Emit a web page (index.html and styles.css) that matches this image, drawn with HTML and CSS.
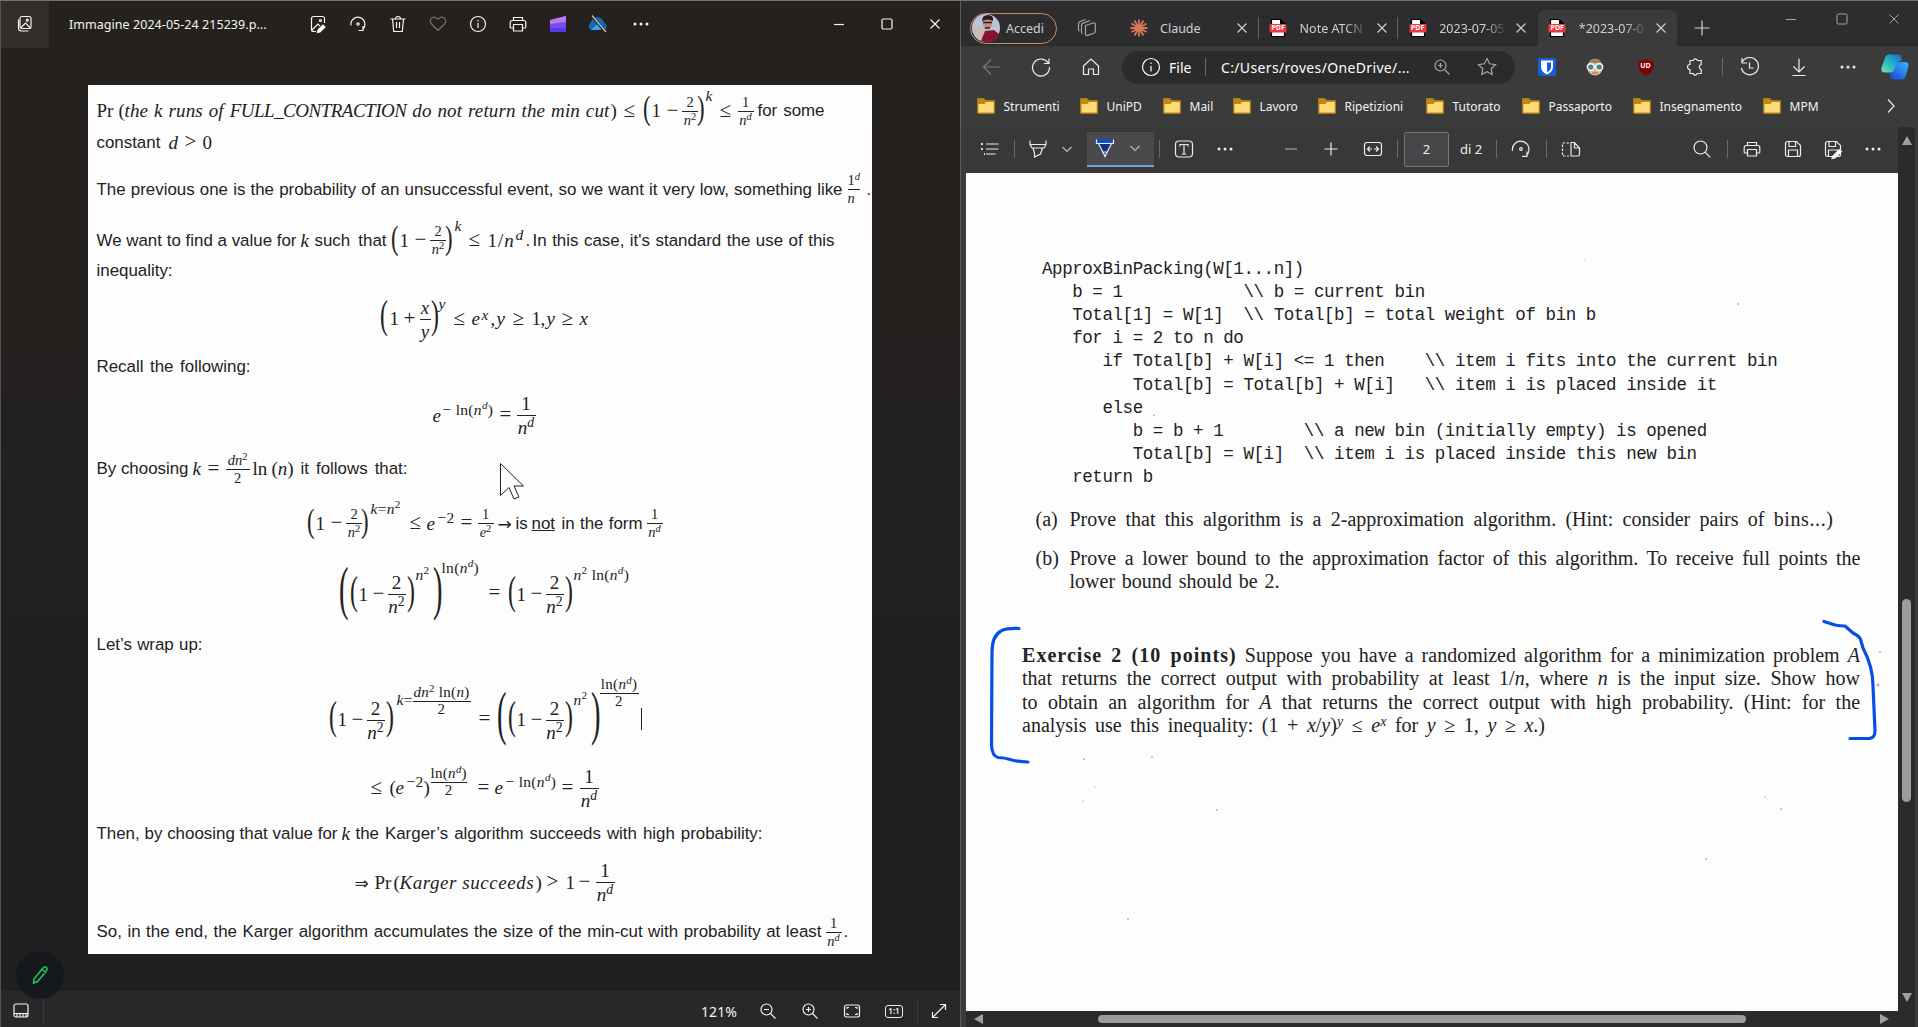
FILE: index.html
```html
<!DOCTYPE html>
<html lang="it">
<head>
<meta charset="utf-8">
<title>Immagine 2024-05-24 215239</title>
<link rel="stylesheet" href="styles.css">
</head>
<body>
<svg class="defs" width="0" height="0">
  <symbol id="x" viewBox="0 0 20 20"><path d="M5.500 5.500l9 9M14.500 5.500l-9 9"/></symbol>
  <symbol id="min" viewBox="0 0 20 20"><path d="M5 10.500h10"/></symbol>
  <symbol id="max" viewBox="0 0 20 20"><rect x="5" y="5" width="10" height="10" rx="1.200"/></symbol>
  <symbol id="dots" viewBox="0 0 20 20"><g fill="currentColor" stroke="none"><circle cx="4" cy="10" r="1.500"/><circle cx="10" cy="10" r="1.500"/><circle cx="16" cy="10" r="1.500"/></g></symbol>
  <symbol id="info" viewBox="0 0 20 20"><circle cx="10" cy="10" r="7.500"/><path d="M10 9v5M10 6v1.400"/></symbol>
  <symbol id="print" viewBox="0 0 20 20"><path d="M5.500 6.500V3.500h9v3M5.500 14H3.200a1 1 0 0 1-1-1V8.500a2 2 0 0 1 2-2h11.600a2 2 0 0 1 2 2V13a1 1 0 0 1-1 1H14.500M5.500 10.500h9v6.500h-9z"/></symbol>
  <symbol id="zin" viewBox="0 0 20 20"><circle cx="8.500" cy="8.500" r="5.500"/><path d="M12.500 12.500l5 5M8.500 6v5M6 8.500h5"/></symbol>
  <symbol id="zout" viewBox="0 0 20 20"><circle cx="8.500" cy="8.500" r="5.500"/><path d="M12.500 12.500l5 5M6 8.500h5"/></symbol>
  <symbol id="chev" viewBox="0 0 14 14"><path d="M2.500 5l4.500 4.500L11.500 5"/></symbol>
  <symbol id="folder" viewBox="0 0 18 16"><path d="M.5 1.500a1 1 0 0 1 1-1h5l2 2h8a1 1 0 0 1 1 1v10.800a1 1 0 0 1-1 1h-15a1 1 0 0 1-1-1z" fill="#c08a12" stroke="#a87b1e"/><path d="M1.500 6h6l1.500-2h7.700v10.500H1.500z" fill="#ffdc78" stroke="none"/></symbol>
  <symbol id="pdf" viewBox="0 0 20 20"><path d="M3.500 1.500h9l4 4v13h-13z" fill="#fff" stroke="#000"/><path d="M12 1v5h5z" fill="#000" stroke="none"/><rect x="1.500" y="6" width="17" height="8.600" rx="1" fill="#e8373e" stroke="none"/></symbol>
  <symbol id="save" viewBox="0 0 20 20"><path d="M4.500 2.500h9l4 4v9a2 2 0 0 1-2 2h-11a2 2 0 0 1-2-2v-11a2 2 0 0 1 2-2zM6 3v4.500h6.500V3M5.500 17v-6h9v6"/></symbol>
  <symbol id="rot" viewBox="0 0 20 20"><path d="M1.500 12a8.300 8.300 0 1 1 14 4.500M16 12.500v4.800h-5"/><circle cx="10" cy="10" r="1.300"/></symbol>
</svg>
<div class="desktop">

<section class="photos">
  <header class="photos-bar">
    <span class="tile"><svg class="ic"><g><rect x="5" y="2.500" width="11" height="12" rx="2"/><path d="M3.500 5.500v8.500a3 3 0 0 0 3 3h7M6 13.500l4.500-4.500 4.500 4.500"/><circle cx="12.300" cy="6.200" r="1"/></g></svg></span>
    <span class="name">Immagine 2024-05-24 215239.p...</span>
    <svg class="ic"><path d="M16.500 9V4.500a2 2 0 0 0-2-2h-9a2 2 0 0 0-2 2v11a2 2 0 0 0 2 2h2.500M4 16l6-6 2 2"/><circle cx="12.500" cy="6.500" r="1"/><path d="M10 16l5-5 2 2-5 5-2.500.5z" fill="#fff"/></svg>
    <svg class="ic"><path d="M3 11.500a7 7 0 1 1 11.500 4M15 12v4.500h-4.500"/><circle cx="10" cy="10" r="1.200"/></svg>
    <svg class="ic"><path d="M2.500 5h15M7.500 5a2.500 2.500 0 0 1 5 0M4.500 5l1.200 12.500h8.600L15.500 5M8.500 8v6M11.500 8v6"/></svg>
    <svg class="ic dim"><path d="M10 16.500L3.500 10C-.5 5 6.500.5 10 5.500 13.500.5 20.500 5 16.500 10z"/></svg>
    <svg class="ic"><use href="#info"/></svg>
    <svg class="ic"><use href="#print"/></svg>
    <svg class="ic"><path d="M2 6l16-4v16H2z" fill="#7a4cf0" stroke="none"/><path d="M2 6l16-4v6L2 10z" fill="#b87af2" stroke="none"/><path d="M2 14h16v4H2z" fill="#5a3ae8" stroke="none"/></svg>
    <svg class="ic"><path d="M4 16a4 4 0 0 1-1-7.500A6 6 0 0 1 13 4.500a6 6 0 0 1 3 4A4 4 0 0 1 16 16z" fill="#0f6cbd" stroke="none"/><path d="M3 16l7-6.500 7.500 6z" fill="#35a8ee" stroke="none"/><path d="M3.500 1.500l14 16.500" stroke="#2a2420" stroke-width="3"/><path d="M4 1.500l14 16.500" stroke="#c8c8c8"/></svg>
    <svg class="ic"><use href="#dots"/></svg>
    <svg class="ic"><use href="#min"/></svg>
    <svg class="ic"><use href="#max"/></svg>
    <svg class="ic"><use href="#x"/></svg>
  </header>

  <main class="doc">
    <div class="row r1"><span>Pr</span><span>(</span><em class="j">the k runs of <span class="caps">FULL_CONTRACTION</span> do not return the min cut</em><span>)</span><span class="op">≤</span>
      <span class="ps"><span class="p">(</span><span>1</span><span class="op">−</span><span class="frac s"><span>2</span><span><em>n</em><sup>2</sup></span></span><span class="p">)</span></span>
      <em class="e up15">k</em><span class="op">≤</span><span class="frac s"><span>1</span><span><em>n<sup>d</sup></em></span></span><span class="t j">for some</span></div>
    <div class="row r2"><span class="t">constant</span><em>d</em><span class="op">&gt;</span><span>0</span></div>
    <div class="row r3"><span class="t j">The previous one is the probability of an unsuccessful event, so we want it very low, something like</span><span class="frac s tall"><span>1<sup><em>d</em></sup></span><span><em>n</em></span></span><span class="t">.</span></div>
    <div class="row r4"><span class="t j">We want to find a value for</span><em>k</em><span class="t j">such that</span>
      <span class="ps"><span class="p">(</span><span>1</span><span class="op">−</span><span class="frac s"><span>2</span><span><em>n</em><sup>2</sup></span></span><span class="p">)</span></span>
      <em class="e up15">k</em><span class="op">≤</span><span class="slash">1/<em>n</em></span><em class="e up5">d</em><span class="t">.</span><span class="t j">In this case, it's standard the use of this</span></div>
    <div class="row r5"><span class="t">inequality:</span></div>
    <div class="row r6"><span class="p l">(</span><span>1</span><span class="op">+</span><span class="frac"><em>x</em><em>y</em></span><span class="p l">)</span><em class="e up15">y</em><span class="op">≤</span><em>e</em><em class="e up4">x</em><span>,</span><em>y</em><span class="op">≥</span><span>1</span><span>,</span><em>y</em><span class="op">≥</span><em>x</em></div>
    <div class="row r7"><span class="t j">Recall the following:</span></div>
    <div class="row r8"><em>e</em><span class="e up5">− ln(<em>n</em><sup><em>d</em></sup>)</span><span class="op">=</span><span class="frac"><span>1</span><span><em>n<sup>d</sup></em></span></span></div>
    <div class="row r9"><span class="t j">By choosing</span><em>k</em><span class="op">=</span><span class="frac s"><span><em>dn</em><sup>2</sup></span><span>2</span></span><span>ln</span><span>(<em>n</em>)</span><span class="t j">it follows that:</span></div>
    <div class="row r10"><span class="ps"><span class="p">(</span><span>1</span><span class="op">−</span><span class="frac s"><span>2</span><span><em>n</em><sup>2</sup></span></span><span class="p">)</span></span>
      <span class="e up15"><em>k</em>=<em>n</em><sup>2</sup></span><span class="op">≤</span><em>e</em><span class="e up5">−2</span><span class="op">=</span><span class="frac s"><span>1</span><span><em>e</em><sup>2</sup></span></span><span class="arrow">→</span><span class="t">is</span><u class="t">not</u><span class="t j">in the form</span><span class="frac s"><span>1</span><span><em>n<sup>d</sup></em></span></span></div>
    <div class="row r11"><span class="p xl">(</span><span class="pl"><span class="p l">(</span><span>1</span><span class="op">−</span><span class="frac"><span>2</span><span><em>n</em><sup>2</sup></span></span><span class="p l">)</span></span><span class="e up20"><em>n</em><sup>2</sup></span><span class="p xl">)</span><span class="e up27">ln(<em>n</em><sup><em>d</em></sup>)</span><span class="op">=</span><span class="pl"><span class="p l">(</span><span>1</span><span class="op">−</span><span class="frac"><span>2</span><span><em>n</em><sup>2</sup></span></span><span class="p l">)</span></span><span class="e up20"><em>n</em><sup>2</sup> ln(<em>n</em><sup><em>d</em></sup>)</span></div>
    <div class="row r12"><span class="t j">Let’s wrap up:</span></div>
    <div class="row r13"><span class="pl"><span class="p l">(</span><span>1</span><span class="op">−</span><span class="frac"><span>2</span><span><em>n</em><sup>2</sup></span></span><span class="p l">)</span></span><span class="e up20"><em>k</em>=</span><span class="frac s ef up19"><span><em>dn</em><sup>2</sup> ln(<em>n</em>)</span><span>2</span></span><span class="op">=</span><span class="p xl">(</span><span class="pl"><span class="p l">(</span><span>1</span><span class="op">−</span><span class="frac"><span>2</span><span><em>n</em><sup>2</sup></span></span><span class="p l">)</span></span><span class="e up20"><em>n</em><sup>2</sup></span><span class="p xl">)</span><span class="frac s ef up27"><span>ln(<em>n</em><sup><em>d</em></sup>)</span><span>2</span></span><span class="caret"></span></div>
    <div class="row r14"><span class="op">≤</span><span>(</span><em>e</em><span class="e up5">−2</span><span>)</span><span class="frac s ef up6"><span>ln(<em>n</em><sup><em>d</em></sup>)</span><span>2</span></span><span class="op">=</span><em>e</em><span class="e up5">− ln(<em>n</em><sup><em>d</em></sup>)</span><span class="op">=</span><span class="frac"><span>1</span><span><em>n<sup>d</sup></em></span></span></div>
    <div class="row r15"><span class="t j">Then, by choosing that value for</span><em>k</em><span class="t j">the Karger’s algorithm succeeds with high probability:</span></div>
    <div class="row r16"><span class="arrow">⇒</span><span>Pr</span><span>(</span><em class="wide">Karger succeeds</em><span>)</span><span class="op">&gt;</span><span>1</span><span class="op">−</span><span class="frac"><span>1</span><span><em>n<sup>d</sup></em></span></span></div>
    <div class="row r17"><span class="t j">So, in the end, the Karger algorithm accumulates the size of the min-cut with probability at least</span><span class="frac s"><span>1</span><span><em>n<sup>d</sup></em></span></span><span class="t">.</span></div>
  </main>

  <svg class="pointer" viewBox="0 0 24 38"><path d="M.5.5v32l8.500-8 5 11.500 5-2-5-11h9.500z" fill="#fff" stroke="#222" stroke-width="1"/></svg>
  <span class="edit"><svg class="ic"><path d="M12.500 3.500l2-1.500q2-.5 2.500 1.500l-.5 2.500L7.500 16.500 3.500 18l.5-4zM12 4.500l4 3"/></svg></span>

  <footer class="photos-foot">
    <svg class="ic"><rect x="3" y="3" width="14" height="13" rx="2"/><path d="M3 12.500h14M6 12.500V16M9 12.500V16M12 12.500V16M15 12.500V16"/></svg>
    <i class="vr"></i>
    <span class="pct">121%</span>
    <svg class="ic"><use href="#zout"/></svg>
    <svg class="ic"><use href="#zin"/></svg>
    <svg class="ic"><rect x="2.500" y="4" width="15" height="12" rx="2"/><path d="M5 8V6.500h2M13 6.500h2V8M5 12v1.500h2M13 13.500h2V12"/></svg>
    <span class="one">1:1</span>
    <i class="vr"></i>
    <svg class="ic"><path d="M3.500 16.500l13-13M11 3.500h5.500V9M3.500 11v5.500H9"/></svg>
  </footer>
</section>

<section class="edge">
  <header class="strip">
    <span class="pill"><svg class="avatar" viewBox="0 0 28 28"><circle cx="14" cy="14" r="14" fill="#b9c4dc"/><path d="M0 13h14v13A14 14 0 0 1 0 13z" fill="#c9bdb4"/><path d="M9 27l4-10 9-1 5 4a14 14 0 0 1-18 7z" fill="#8a1230"/><ellipse cx="15.500" cy="9" rx="5" ry="6.500" fill="#c58f80"/><path d="M10 7q0-6 6-6t5 6q-5-3-11 0z" fill="#2a1d22"/><path d="M11 8.500h9M13 14h5" stroke="#302028" stroke-width="1.500"/></svg>Accedi</span>
    <svg class="ic soft"><path d="M8.500 7.500l7.500-2.500q2-.5 2.300 1.200v6.800q0 1.600-1.500 2.200l-6.300 2.200q-2 .5-2-1.500zM5.500 15.500q-1 0-1-1.500V7.500q0-1.800 1.600-2.400l6.900-2.600M2.500 13q-1-.3-1-1.500V5.800q0-1.700 1.600-2.300L8.500 1.500"/></svg>
    <div class="tab"><svg class="ic"><path d="M10 10V1.500M10 10l4.500-7.500M10 10l7.500-4.500M10 10h8.500M10 10l7.500 4M10 10l4.500 7.500M10 10v8.500M10 10l-4.500 7.500M10 10l-7.500 4M10 10H1.500M10 10L2.500 5.500M10 10L5.500 2.500" stroke="#d97757" stroke-width="1.800"/></svg><span>Claude</span><svg class="ic"><use href="#x"/></svg></div>
    <div class="tab"><span class="pdf"><svg class="ic"><use href="#pdf"/></svg><b>PDF</b></span><span class="fade">Note ATCN</span><svg class="ic"><use href="#x"/></svg></div>
    <div class="tab last"><span class="pdf"><svg class="ic"><use href="#pdf"/></svg><b>PDF</b></span><span class="fade">2023-07-05</span><svg class="ic"><use href="#x"/></svg></div>
    <div class="tab on"><span class="pdf"><svg class="ic"><use href="#pdf"/></svg><b>PDF</b></span><span class="fade">*2023-07-0</span><svg class="ic"><use href="#x"/></svg></div>
    <i></i>
    <svg class="ic"><path d="M10 2.500v15M2.500 10h15"/></svg>
    <svg class="ic ctl"><use href="#min"/></svg>
    <svg class="ic ctl"><use href="#max"/></svg>
    <svg class="ic ctl"><use href="#x"/></svg>
  </header>

  <nav class="nav">
    <svg class="ic off"><path d="M18.500 10H2M9 2.500L1.500 10 9 17.500"/></svg>
    <svg class="ic"><path d="M17.500 6.500A8.500 8.500 0 1 0 18.500 10M18 1.500v5h-5"/></svg>
    <svg class="ic"><path d="M2.500 9L10 2l7.500 7v8.500h-5V12h-5v5.500h-5z"/></svg>
    <div class="address">
      <svg class="ic"><circle cx="10" cy="10" r="8.500"/><path d="M10 9v5.500M10 5.500v1.600"/></svg><span>File</span><i class="vr"></i><span class="url">C:/Users/roves/OneDrive/...</span>
      <svg class="ic soft"><use href="#zin"/></svg>
      <svg class="ic soft"><path d="M10 1.500l2.600 5.300 5.900.8-4.300 4.100 1 5.800-5.200-2.800-5.200 2.800 1-5.800L1.500 7.600l5.900-.8z"/></svg>
    </div>
    <svg class="ic"><rect x="1" y="1" width="18" height="18" rx="2" fill="#175ddc" stroke="none"/><path d="M4 3.500h12V10q0 5-6 7.500Q4 15 4 10z" fill="#fff" stroke="none"/><path d="M10 5.500h4V10q0 3.500-4 5.300z" fill="#175ddc" stroke="none"/></svg>
    <svg class="ic"><circle cx="10" cy="11" r="7.500" fill="#e2b494" stroke="none"/><path d="M3 8q1-6.500 7-6.500T17 8q-3-2-7-2T3 8z" fill="#a0805c" stroke="none"/><circle cx="5.800" cy="10" r="3.400" fill="#3a8890" stroke="#f2f2f2" stroke-width="1.600"/><circle cx="14.200" cy="10" r="3.400" fill="#3a8890" stroke="#f2f2f2" stroke-width="1.600"/><path d="M7 16h6" stroke="#b56a58"/></svg>
    <span class="ub"><svg class="ic"><path d="M10 2q3 2 7.500 2.200V10q0 5-7.500 8.500Q2.500 15 2.500 10V4.200Q7 4 10 2z" fill="#800000" stroke="none"/></svg><b>UD</b></span>
    <svg class="ic"><path d="M5 3.500h3.200a2.200 2.200 0 0 1 4.200 0h3.800v4a2.600 2.600 0 0 0 0 5v4h-4a2.200 2.200 0 0 1-4.200 0H5v-4a2.500 2.500 0 1 1 0-5z"/></svg>
    <i class="vr"></i>
    <svg class="ic"><path d="M2 5.500A8.600 8.600 0 1 1 1.400 11M2 1v5h5M9.500 5.500V11h4"/></svg>
    <svg class="ic"><path d="M10 1.500v13M4.500 9.500l5.500 5.500 5.500-5.500M3.500 18.500h13"/></svg>
    <svg class="ic"><use href="#dots"/></svg>
    <svg class="copilot" viewBox="0 0 28 28"><defs><linearGradient id="ca" x1="0" y1="1" x2="1" y2="0"><stop offset="0" stop-color="#7be0a0"/><stop offset=".5" stop-color="#1fb6c9"/><stop offset="1" stop-color="#1b62d8"/></linearGradient><linearGradient id="cb" x1="0" y1="1" x2="1" y2="0"><stop offset="0" stop-color="#1c3fd0"/><stop offset="1" stop-color="#35b8ff"/></linearGradient></defs><path d="M8 1.500h9q3 0 3.500 3l.5 3q-4 0-5.500 5l-1.500 4q-1 3-4 3H4q-4.500 0-3.500-4.500L4 5q1-3.500 4-3.500z" fill="url(#ca)"/><path d="M21 9h3q4 0 3.500 4L25 22q-1 4.500-4.500 4.500H12q-3 0-3.500-6.500 4-.5 5.500-5l2-5q1-1 5-1z" fill="url(#cb)"/></svg>
  </nav>

  <div class="marks">
    <a><svg><use href="#folder"/></svg>Strumenti</a>
    <a><svg><use href="#folder"/></svg>UniPD</a>
    <a><svg><use href="#folder"/></svg>Mail</a>
    <a><svg><use href="#folder"/></svg>Lavoro</a>
    <a><svg><use href="#folder"/></svg>Ripetizioni</a>
    <a><svg><use href="#folder"/></svg>Tutorato</a>
    <a><svg><use href="#folder"/></svg>Passaporto</a>
    <a><svg><use href="#folder"/></svg>Insegnamento</a>
    <a><svg><use href="#folder"/></svg>MPM</a>
    <svg class="ic"><path d="M7 3.500l6 6.500-6 6.500"/></svg>
  </div>

  <div class="viewer">
    <div class="tools">
      <svg class="ic"><path d="M6 5h12.500M6 10h12.500M6 15h9.500"/><path d="M1 5h1.800M1 10h1.800M4 15h1" stroke-width="2"/></svg>
      <i class="vr"></i>
      <svg class="ic"><path d="M2 1.500v4l2 3.500h12l2-3.500v-4M2.500 5.500h15M5 9l1.500 5v4l6-3 2-6"/></svg>
      <svg class="chev"><use href="#chev"/></svg>
      <span class="pen"><svg class="ic"><path d="M1.500 1.500h17v4h-17z" fill="#0a4be0" stroke="none"/><path d="M3.500 5.500h13L10 18z" fill="#16307c" stroke="none"/><path d="M1.500 1.500v4h17v-4M3.500 5.500L10 18.500l6.500-13M8 14l2 4.500 2-4.500z"/></svg><svg class="chev"><use href="#chev"/></svg></span>
      <i class="vr"></i>
      <svg class="ic"><rect x="1.500" y="2" width="17" height="16" rx="3.500"/><path d="M6 7.500V5.500h8v2M10 5.500v9.500M8 15h4"/></svg>
      <svg class="ic"><use href="#dots"/></svg>
      <svg class="ic soft"><path d="M4 10h12"/></svg>
      <svg class="ic"><path d="M10 3.500v13M3.500 10h13"/></svg>
      <svg class="ic"><rect x="1.500" y="3.500" width="17" height="13" rx="2.500"/><path d="M5 10h4M11 10h4M6.800 7.500L4.500 10l2.300 2.500M13.200 7.500l2.300 2.500-2.300 2.500"/></svg>
      <i class="vr"></i>
      <span class="num">2</span>
      <span class="of">di 2</span>
      <i class="vr"></i>
      <svg class="ic"><use href="#rot"/></svg>
      <i class="vr"></i>
      <svg class="ic"><path d="M10 3.500v13.500h7a1.500 1.500 0 0 0 1.500-1.500V9l-5-5.500zM13.500 4v5h5"/><path d="M8 4H1.500v13H8" stroke-dasharray="2.500 1.500"/></svg>
      <svg class="ic"><circle cx="8.500" cy="8.500" r="6.500"/><path d="M13.300 13.300l5 5"/></svg>
      <i class="vr"></i>
      <svg class="ic"><use href="#print"/></svg>
      <svg class="ic"><use href="#save"/></svg>
      <svg class="ic"><use href="#save"/><path d="M10 17l6.500-6.500 2 2L12 19l-3 .5z" fill="#fff"/></svg>
      <svg class="ic"><use href="#dots"/></svg>
    </div>
    <article class="page">
<pre>ApproxBinPacking(W[1...n])
   b = 1            \\ b = current bin
   Total[1] = W[1]  \\ Total[b] = total weight of bin b
   for i = 2 to n do
      if Total[b] + W[i] &lt;= 1 then    \\ item i fits into the current bin
         Total[b] = Total[b] + W[i]   \\ item i is placed inside it
      else
         b = b + 1        \\ a new bin (initially empty) is opened
         Total[b] = W[i]  \\ item i is placed inside this new bin
   return b</pre>
      <div class="item a"><span>(a)</span><p class="w763">Prove that this algorithm is a 2-approximation algorithm. (Hint: consider pairs of <span class="ell">bins...)</span></p></div>
      <div class="item b"><span>(b)</span><div><p>Prove a lower bound to the approximation factor of this algorithm. To receive full points the</p><p class="w209">lower bound should be 2.</p></div></div>
      <div class="exercise">
        <p><b>Exercise 2 (10 points)</b> Suppose you have a randomized algorithm for a minimization problem <em>A</em></p>
        <p>that returns the correct output with probability at least 1/<em>n</em>, where <em>n</em> is the input size. Show how</p>
        <p>to obtain an algorithm for <em>A</em> that returns the correct output with high probability. (Hint: for the</p>
        <p class="w522">analysis use this inequality: (1 + <em>x</em>/<em>y</em>)<sup><em>y</em></sup> ≤ <em>e</em><sup><em>x</em></sup> for <em>y</em> ≥ 1, <em>y</em> ≥ <em>x</em>.)</p>
      </div>
      <svg class="ink" viewBox="966 173 932 838">
        <path d="M1019 628.500Q1006 628 1001 631Q992 636 992 652L991.500 745Q992 756 998 757.500Q1004 757.500 1012 760Q1020 762 1028 762"/>
        <path d="M1824 621.500L1835 625Q1840 626 1845 626L1853 633Q1861 637 1861 641L1863 648Q1873 667 1873 686L1875 731Q1875 739 1868 738.500L1850 738.500"/>
        <g class="specks"><circle cx="1585" cy="260" r=".6"/><circle cx="1738" cy="304" r="1"/><circle cx="1084" cy="759" r="1"/><circle cx="1152" cy="757" r="1"/><circle cx="1217" cy="810" r="1"/><circle cx="1128" cy="919" r="1"/><circle cx="1765" cy="797" r=".8"/><circle cx="1781" cy="809" r="1"/><circle cx="1706" cy="859" r="1"/><circle cx="1880" cy="652" r="1"/><circle cx="1878" cy="685" r="1.500"/><circle cx="1154" cy="415" r="1"/><circle cx="1095" cy="787" r=".7"/><circle cx="1083" cy="801" r=".7"/></g>
      </svg>
    </article>
    <div class="vbar"><i class="up"></i><i class="thumb"></i><i class="down"></i></div>
    <div class="hbar"><i class="left"></i><i class="thumb"></i><i class="right"></i></div>
  </div>
</section>
</div>
</body>
</html>
```
FILE: styles.css
```css
* { box-sizing: border-box; }
body { margin: 0; background: #3b3b3b; font-family: "Noto Sans", "Open Sans", sans-serif; }
.defs { position: absolute; }
.desktop { display: grid; grid-template-columns: 960px 958px; width: 1918px; height: 1027px; border-top: 1px solid #73726f; overflow: hidden; }
.ic { display: block; width: 20px; height: 20px; flex: none; }
svg { fill: none; stroke: currentColor; stroke-width: 1.2; overflow: visible; }
.vr { display: block; width: 1px; height: 18px; background: #6a6a6a; }

/* photo viewer */
.photos { position: relative; display: flex; flex-direction: column; color: #f4f4f4; border-left: 1px solid #555350;
  background: linear-gradient(#25211d 0, #25201d 20%, #222020 45%, #202022 60%, #202022 100%); }
.photos-bar { height: 84px; display: grid; align-items: center; grid-template-rows: 46px;
  grid-template-columns: 68px 239px repeat(7, 40px) 43px 198px 48px 48px 34px; }
.tile { width: 48px; height: 47px; display: grid; place-items: center; background: #322e2b; }
.name { font-size: 12.500px; letter-spacing: .05px; white-space: nowrap; }
.dim { color: #77716d; }
.doc { margin-left: 87px; width: 784px; height: 869px; padding: 14px 0 0 8.500px; background: #fdfdfd; color: #222;
  font-family: "Liberation Serif", serif; font-size: 19px; line-height: 24px; display: grid; align-content: start;
  grid-template-rows: 31.5px 47px 51px 30px 48.5px 48px 48.5px 53.5px 54.500px 68.700px 53.300px 74px 68.700px 46.300px 48.300px 49.700px 24px; }
.row { display: grid; grid-template-rows: 24px; align-items: center; align-content: start; justify-content: start; white-space: nowrap; }
.t { font-family: "Liberation Sans", sans-serif; font-size: 16.900px; }
.j { display: block; padding-right: 4px; text-align: justify; text-align-last: justify; }
.caps { letter-spacing: -.5px; }
em.j { letter-spacing: .15px; padding-right: 1px; }
.wide { letter-spacing: .55px; }
.slash { letter-spacing: 1px; }
.op { margin-top: -3px; font-size: 21px; }
.arrow { font-family: "DejaVu Sans", sans-serif; font-size: 17px; }
.doc sup { font-size: 72%; line-height: 0; vertical-align: .5em; }
.e { font-size: 15.500px; letter-spacing: .3px; }
.frac { justify-self: start; display: inline-flex; flex-direction: column; align-items: stretch; text-align: center; line-height: 23px; min-width: 11px; }
.frac > :first-child { border-bottom: 1.500px solid #222; }
.frac > :last-child { margin-top: 0; }
.frac.s { font-size: 14.500px; line-height: 17px; min-width: 16px; }
.frac.tall { min-width: 10px; margin-left: 1px; }
.r3 .frac > :last-child, .r3 .frac > :first-child { text-align: left; }
.frac.s.ef { line-height: 15px; font-size: 15px; letter-spacing: .3px; }
.ef.frac > :first-child { line-height: 18px; }
.ef.frac > :last-child { line-height: 14px; margin-bottom: 4px; }
.r1 .frac, .r17 .frac, .r4 .frac { min-width: 16px; }
.r9 .frac { min-width: 24px; }
.r13 > .ef.up19 { min-width: 58px; }
.r13 > .ef.up27, .r14 > .ef { min-width: 39px; }
.ps, .pl { display: grid; align-items: center; grid-template-rows: 24px; }
.ps { grid-template-columns: 9px 15px 15.500px 15px 8px; }
.pl { grid-template-columns: 9px 14px 15px 19px 8px; transform: translateY(1px); }
.pl .frac { min-width: 18px; }
.p { display: inline-block; width: 6px; transform-origin: 0 50%; transform: translateY(-3px) scale(1.200, 1.800); }
.p.l { transform: translateY(-4px) scale(1.250, 2.150); }
.p.xl { transform: translateY(-5px) scale(1.500, 3.100); }
.up4 { transform: translateY(-4px); }
.up5 { transform: translateY(-6px); }
.up6 { transform: translateY(-6px); }
.up15 { transform: translateY(-15px); }
.up19 { transform: translateY(-18px); }
.up20 { transform: translateY(-19px); }
.up27 { transform: translateY(-26px); }
.caret { width: 1.500px; height: 22px; background: #222; }
.r1 { grid-template-columns: 22px 6px 486px 13px 19px 63px 14px 18px 20px 71px; }
.r2 { grid-template-columns: 72px 16px 18px 12px; }
.r3 { grid-template-columns: 750px 20px 6px; }
.r4 { grid-template-columns: 204px 14px 76px 64px 14px 19px 28px 10px 7px 306px; }
.r6 { margin-left: 283px; grid-template-columns: 10px 14px 16px 11px 8px 15px 18px 10px 9px 6px 16px 19px 9px 6px 15px 18px 12px; }
.r7 { grid-template-columns: 158px; }
.r8 { margin-left: 336px; grid-template-columns: 10px 57px 17px 20px; }
.r9 { grid-template-columns: 96px 15px 18px 27px 19px 29px 111px; }
.r10 { margin-left: 210px; grid-template-columns: 64px 39px 17px 11px 23px 17px 20px 18px 16px 30px 85px 18px; }
.r11 { margin-left: 242px; padding-top: 1.500px; grid-template-columns: 11px 66px 17px 9px 47px 19px 66px 60px; }
.r12 { grid-template-columns: 110px; }
.r13 { margin-left: 232px; grid-template-columns: 68px 16px 66px 18px 11px 66px 17px 9px 41px 3px; }
.r14 { margin-left: 274px; grid-template-columns: 19px 6px 11px 17px 7px 47px 17px 11px 56px 18px 20px; }
.r15 { grid-template-columns: 245px 14px 411px; }
.r16 { margin-left: 258px; grid-template-columns: 20px 19px 6px 136px 11px 19px 13px 17px 20px; }
.r17 { grid-template-columns: 729px 18px 6px; }
.r8 .frac, .r14 .frac, .r16 .frac { min-width: 19px; }
.pointer { position: absolute; left: 499px; top: 462px; width: 24px; height: 38px; }
.edit { position: absolute; left: 15px; top: 950px; width: 48px; height: 48px; border-radius: 50%; background: #15191c; color: #1fc95f; display: grid; place-items: center; }
.edit .ic { stroke-width: 1.500; }
.photos-foot { margin-top: auto; height: 36px; padding-left: 10px; background: #28282a; display: grid; align-items: center; grid-template-rows: 40px;
  grid-template-columns: 32px 658px 57px 42px 42px 42px 33px 12px 30px; }
.photos-foot .vr { height: 24px; background: #3c3c3e; }
.pct { font-size: 14px; letter-spacing: .1px; }
.one { width: 18px; height: 13px; margin-left: 1px; border: 1.200px solid #eee; border-radius: 3px; font-size: 8px; line-height: 10px; text-align: center; font-weight: 600; }

/* browser */
.edge { display: flex; flex-direction: column; background: #3b3b3b; color: #ececec; font-size: 12px; border-left: 1px solid #5c5c5c; }
.strip { height: 45px; background: #2d2d2f; color: #d0d0d0; display: grid; align-items: center; padding: 9px 0 0 9px;
  grid-template-rows: 36px; grid-template-columns: 107px 42px repeat(4, 139.600px) 14.600px 89px 51px 52px 34px; }
.pill { width: 87px; height: 31px; border: 1.500px solid #d28b55; border-radius: 16px; display: flex; align-items: center; gap: 6px; padding-left: 1px; font-size: 12.500px; }
.avatar { width: 28px; height: 28px; stroke: none; }
.soft { color: #a5a5a5; }
.tab { height: 36px; display: grid; align-items: center; grid-template-columns: 31.500px 72px 20px; padding-left: 9.500px; position: relative; white-space: nowrap; }
.tab:not(.on):not(.last)::after { content: ""; position: absolute; right: 0; top: 7px; width: 1px; height: 22px; background: #626262; }
.tab.on { background: #3b3b3b; border-radius: 8px 8px 0 0; }
.tab > span:nth-child(2) { width: 65px; overflow: hidden; font-size: 12.500px; }
.fade { -webkit-mask-image: linear-gradient(90deg, #000 70%, transparent 105%); mask-image: linear-gradient(90deg, #000 70%, transparent 105%); }
.pdf, .ub { display: grid; justify-items: start; align-items: center; width: 20px; }
.pdf > *, .ub > * { grid-area: 1 / 1; }
.pdf b { width: 20px; text-align: center; font-size: 7px; line-height: 8px; color: #fff; }
.ub b { width: 20px; text-align: center; font-size: 7px; line-height: 8px; color: #fff; margin-top: -2px; }
.ctl { margin-top: -19px; color: #a8a8a8; stroke-width: 1; }
.nav { height: 42px; padding-left: 21px; display: grid; align-items: center;
  grid-template-columns: 49px 50px 41px 415px 48px 50.500px 49.500px 37px 18px 49px 49px 43px 37px; }
.nav .off { color: #7c7c7c; }
.address { width: 393px; height: 33px; border-radius: 17px; background: #2b2b2b; padding-left: 19px; display: grid; align-items: center; font-size: 14px; color: #fff; white-space: nowrap;
  grid-template-columns: 28px 36px 16px 211px 45px 38px; }
.url { letter-spacing: .35px; }
.copilot { width: 28px; height: 28px; stroke: none; }
.marks { height: 36px; margin-bottom: 3px; padding-left: 15.500px; display: grid; align-items: center;
  grid-template-columns: 103px 83px 70px 85px 108px 96px 111px 130px 118px 37px; }
.marks a { display: flex; align-items: center; gap: 9px; color: #f2f2f2; }
.marks a svg { width: 18px; height: 16px; }
.viewer { flex: 1; margin-left: 5px; display: grid; grid-template-columns: 932px 17px; grid-template-rows: 46px 838px 16px; }
.tools { padding-left: 14px; background: #383838; display: grid; align-items: center; grid-template-rows: 44px;
  grid-template-columns: 34px 14px 32px 27px 72px 15px 41px 66px 40px 42px 34px 7px 56px 36px 15px 35px 15px 131px 35px 15px 41px 40px 40px 35px; }
.chev { width: 14px; height: 14px; color: #bbb; }
.pen { width: 67px; height: 35px; background: #4a4a4d; border-bottom: 2px solid #71a5d0; display: flex; align-items: center; gap: 13px; padding-left: 8px; }
.num { width: 45px; height: 35px; border: 1px solid #777; border-radius: 2px; background: #464649; display: grid; place-items: center; font-size: 13px; }
.of { font-size: 13px; }
.page { position: relative; background: #fdfdfd; color: #222; font-family: "Liberation Serif", serif; font-size: 20px; line-height: 23.200px; padding: 84.500px 38px 0 56px; }
.page pre { margin: 0 0 0 20px; font-family: "Liberation Mono", monospace; font-size: 17.500px; letter-spacing: -.430px; line-height: 23.220px; }
.page p { margin: 0; white-space: nowrap; text-align: justify; text-align-last: justify; }
.item { display: grid; grid-template-columns: 34px 791px; margin-left: 13.500px; }
.item.a { margin-top: 18px; }
.item.b { margin-top: 15.800px; }
.ell { letter-spacing: .6px; }
.w763 { width: 764px; }
.w209 { width: 210px; }
.exercise { margin-top: 51px; }
.exercise b { letter-spacing: 1.050px; }
.exercise .w522 { width: 523px; }
.page sup { font-size: 70%; line-height: 0; vertical-align: .45em; }
.ink { position: absolute; left: 0; top: 0; width: 932px; height: 838px; stroke: #0550e2; stroke-width: 3.200; stroke-linecap: round; stroke-linejoin: round; }
.specks { fill: #b5b5b5; stroke: none; }
.vbar { grid-row: 1 / 4; grid-column: 2; background: #2b2b2b; display: flex; flex-direction: column; align-items: center; padding-top: 9px; border-radius: 4px 4px 0 0; }
.vbar .up { border: 5.500px solid transparent; border-top: 0; border-bottom: 9px solid #a0a0a0; }
.vbar .thumb { width: 9px; height: 203px; margin-top: 454px; border-radius: 5px; background: #9c9c9c; }
.vbar .down { margin-top: 191px; border: 5.500px solid transparent; border-bottom: 0; border-top: 9px solid #a0a0a0; }
.hbar { grid-row: 3; grid-column: 1; background: #2b2b2b; display: flex; align-items: center; padding-left: 8px; }
.hbar .left { border: 5px solid transparent; border-left: 0; border-right: 9px solid #a0a0a0; }
.hbar .thumb { width: 648px; height: 8px; margin-left: 115px; border-radius: 4px; background: #9c9c9c; }
.hbar .right { margin-left: 134px; border: 5px solid transparent; border-right: 0; border-left: 9px solid #a0a0a0; }
```
